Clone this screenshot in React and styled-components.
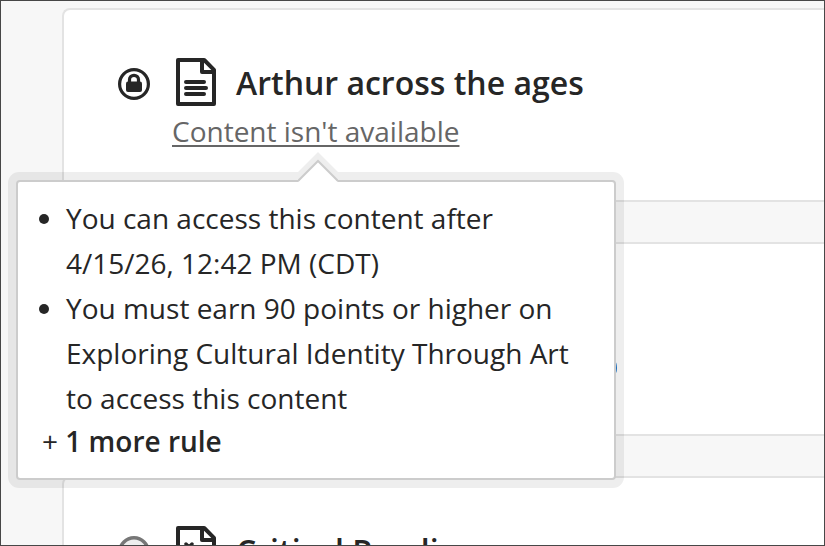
import React from "react";
import styled, { createGlobalStyle } from "styled-components";

const GlobalStyle = createGlobalStyle`
  * {
    box-sizing: border-box;
  }

  body {
    margin: 0;
    background: #f7f7f7;
    color: #262626;
    font-family: "Open Sans", "Noto Sans", sans-serif;
  }
`;

const Page = styled.main`
  display: flex;
  flex-direction: column;
  gap: 40px;
  height: 100vh;
  overflow: hidden;
  padding: 7px 0 0 61px;
  border: 1px solid #474747;
`;

const Card = styled.article`
  flex: none;
  min-height: 194px;
  padding: 48px 24px 48px 54px;
  background: #fff;
  border: 2px solid #e3e3e3;
  border-right: none;
  border-radius: 8px 0 0 8px;
`;

const TitleRow = styled.header`
  display: flex;
  align-items: center;
  height: 48px;

  svg {
    flex: none;
  }
`;

const StatusSlot = styled.span`
  display: flex;
  margin: 4px 26px 0 0;
`;

const Title = styled.h2`
  margin: 2px 0 0 20px;
  font-size: 32px;
  line-height: 48px;
  font-weight: 600;
  white-space: nowrap;
`;

const Availability = styled.div`
  position: relative;
  width: fit-content;
  margin: 5px 0 0 54px;
`;

const AvailabilityButton = styled.button`
  display: block;
  padding: 0;
  border: none;
  background: none;
  color: #666;
  font-family: inherit;
  font-size: 28px;
  line-height: 40px;
  text-decoration: underline;
  text-decoration-thickness: 2px;
  text-underline-offset: 3px;
  white-space: nowrap;
  cursor: pointer;
`;

const Popover = styled.div`
  position: absolute;
  z-index: 1;
  top: 69px;
  left: -156px;
  width: 600px;
  padding: 14px 24px 17px;
  background: #fff;
  border: 2px solid #ccc;
  border-radius: 4px;
  box-shadow: 0 0 0 8px rgba(0, 0, 0, 0.067);
  font-size: 28px;
  line-height: 45px;
`;

const Arrow = styled.svg`
  position: absolute;
  top: -30px;
  left: 280px;
`;

const RuleList = styled.ul`
  margin: 0;
  padding: 0 0 0 24px;
  list-style: none;
`;

const Rule = styled.li`
  position: relative;

  &::before {
    content: "";
    position: absolute;
    top: 18px;
    left: -27px;
    width: 10px;
    height: 10px;
    border-radius: 50%;
    background: #262626;
  }
`;

const MoreRules = styled.p`
  margin: 0;
  line-height: 40px;

  strong {
    font-weight: 600;
  }
`;

const Marker = styled.span`
  display: block;
  width: 28px;
  height: 28px;
  margin: 62px 0 0 471px;
  border-radius: 50%;
  background: #1a73c8;
`;

const LockIcon = () => (
  <svg width="32" height="32" viewBox="0 0 32 32" fill="none" aria-hidden="true">
    <circle cx="16" cy="16" r="14.4" stroke="#262626" strokeWidth="3.2" />
    <path d="M11.5 15V11.5a4.5 4.2 0 0 1 9 0V15" stroke="#262626" strokeWidth="3.2" />
    <rect x="8" y="13.6" width="16" height="10.4" rx="2" fill="#262626" />
  </svg>
);

const NotStartedIcon = () => (
  <svg width="32" height="32" viewBox="0 0 32 32" aria-hidden="true">
    <circle cx="16" cy="16" r="14.2" fill="#eee" stroke="#777" strokeWidth="3.6" />
  </svg>
);

const PageOutline = () => (
  <>
    <path d="M2 2H28.2L38 11.8V46H2Z" />
    <path d="M26 2V14H38" />
  </>
);

const DocumentIcon = () => (
  <svg width="40" height="48" viewBox="0 0 40 48" fill="none" stroke="#262626" strokeWidth="4" strokeLinecap="round" strokeLinejoin="round" aria-hidden="true">
    <PageOutline />
    <path d="M10 24H28M10 30H30M10 36H28" />
  </svg>
);

const TestIcon = () => (
  <svg width="40" height="48" viewBox="0 0 40 48" fill="none" stroke="#262626" strokeWidth="4" strokeLinecap="round" strokeLinejoin="round" aria-hidden="true">
    <PageOutline />
    <path d="M10 18L16 24M16 18L10 24M10 35L13 38L18 31" strokeWidth="3.4" />
    <path d="M23 22H30M23 35H30" />
  </svg>
);

const ArrowUp = () => (
  <Arrow width="40" height="32" viewBox="0 0 40 32" aria-hidden="true">
    <path d="M0 20L20 0L40 20Z" fill="rgba(0, 0, 0, 0.067)" />
    <path d="M0 30L20 9L40 30V32H0Z" fill="#fff" />
    <path d="M0 29L20 9L40 29" fill="none" stroke="#ccc" strokeWidth="2" />
  </Arrow>
);

const rules = [
  "You can access this content after 4/15/26, 12:42 PM (CDT)",
  "You must earn 90 points or higher on Exploring Cultural Identity Through Art to access this content",
];

const App = () => {
  return (
    <>
      <GlobalStyle />
      <Page>
        <Card>
          <TitleRow>
            <StatusSlot><LockIcon /></StatusSlot>
            <DocumentIcon />
            <Title>Arthur across the ages</Title>
          </TitleRow>
          <Availability>
            <AvailabilityButton type="button" aria-describedby="rules">
              Content isn't available
            </AvailabilityButton>
            <Popover id="rules" role="tooltip">
              <ArrowUp />
              <RuleList>
                {rules.map((rule) => (
                  <Rule key={rule}>{rule}</Rule>
                ))}
              </RuleList>
              <MoreRules>
                + <strong>1 more rule</strong>
              </MoreRules>
            </Popover>
          </Availability>
        </Card>
        <Card>
          <Marker />
        </Card>
        <Card>
          <TitleRow>
            <StatusSlot><NotStartedIcon /></StatusSlot>
            <TestIcon />
            <Title>Critical Reading</Title>
          </TitleRow>
        </Card>
      </Page>
    </>
  );
};

export default App;
